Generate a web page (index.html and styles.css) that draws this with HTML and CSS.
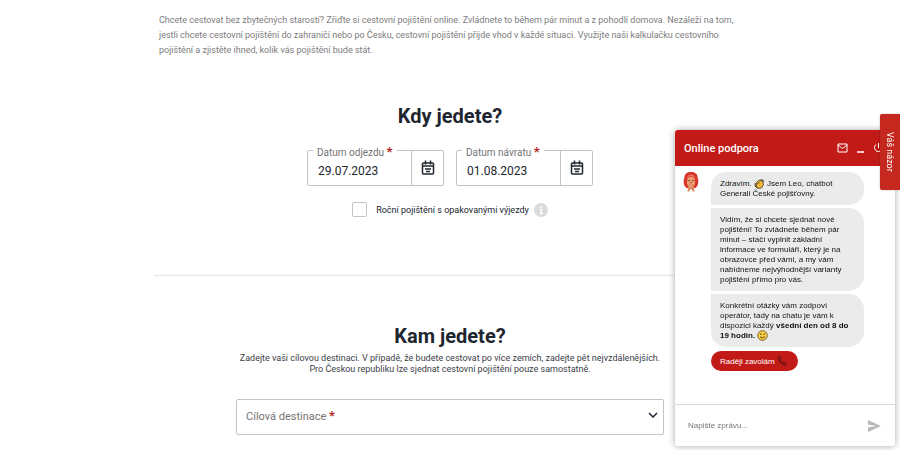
FILE: index.html
```html
<!DOCTYPE html>
<html lang="cs">
<head>
<meta charset="utf-8" />
<title>Cestovní pojištění</title>
<link rel="stylesheet" href="styles.css">
</head>
<body>
<main>
  <p class="intro">Chcete cestovat bez zbytečných starostí? Zřiďte si cestovní pojištění online. Zvládnete to během pár minut a z pohodlí domova. Nezáleží na tom, jestli chcete cestovní pojištění do zahraničí nebo po Česku, cestovní pojištění přijde vhod v každé situaci. Využijte naši kalkulačku cestovního pojištění a zjistěte ihned, kolik vás pojištění bude stát.</p>

  <section class="when">
    <h2>Kdy jedete?</h2>
    <div class="dates">
      <div class="field date">
        <label for="from">Datum odjezdu <b>*</b></label>
        <input type="text" id="from" value="29.07.2023" />
        <button type="button" aria-label="Vybrat datum odjezdu">
          <svg width="14" height="16" viewBox="0 0 14 16"><path d="M2.500 3h9a1 1 0 0 1 1 1v9a1 1 0 0 1-1 1h-9a1 1 0 0 1-1-1V4a1 1 0 0 1 1-1zM1.500 6h11M4.500 .5v4M9.500 .5v4M4 9h6M5 11.500h4" /></svg>
        </button>
      </div>
      <div class="field date">
        <label for="to">Datum návratu <b>*</b></label>
        <input type="text" id="to" value="01.08.2023" />
        <button type="button" aria-label="Vybrat datum návratu">
          <svg width="14" height="16" viewBox="0 0 14 16"><path d="M2.500 3h9a1 1 0 0 1 1 1v9a1 1 0 0 1-1 1h-9a1 1 0 0 1-1-1V4a1 1 0 0 1 1-1zM1.500 6h11M4.500 .5v4M9.500 .5v4M4 9h6M5 11.500h4" /></svg>
        </button>
      </div>
    </div>
    <div class="yearly">
      <input type="checkbox" id="yearly" />
      <label for="yearly">Roční pojištění s opakovanými výjezdy</label>
      <svg width="14" height="14" viewBox="0 0 14 14"><circle cx="7" cy="7" r="7" fill="#dadada" /><path d="M7 3v2M6 6.500h1.300v4M5.700 10.500h3" fill="none" stroke="#fff" stroke-width="1.500" /></svg>
    </div>
  </section>

  <section class="where">
    <h2>Kam jedete?</h2>
    <p>Zadejte vaši cílovou destinaci. V případě, že budete cestovat po více zemích, zadejte pět nejvzdálenějších.<br>Pro Českou republiku lze sjednat cestovní pojištění pouze samostatně.</p>
    <div class="field destination">
      <label for="destination">Cílová destinace <b>*</b></label>
      <select id="destination">
        <option value=""></option>
      </select>
      <svg width="10" height="6" viewBox="0 0 10 6"><path d="M1 1l4 4 4-4" /></svg>
    </div>
  </section>
</main>

<aside class="chat">
  <header>
    <h3>Online podpora</h3>
    <button type="button" aria-label="E-mail">
      <svg width="11" height="10" viewBox="0 0 11 10"><path d="M1 1h9v8H1zM1 2l4.500 3.500L10 2" /></svg>
    </button>
    <button type="button" aria-label="Minimalizovat">
      <svg width="11" height="10" viewBox="0 0 11 10"><path d="M2 9h7" stroke-width="1.500" /></svg>
    </button>
    <button type="button" aria-label="Ukončit">
      <svg width="11" height="10" viewBox="0 0 11 10"><path d="M5.500 0v5M3 1.500a4 4 0 1 0 5 0" /></svg>
    </button>
  </header>
  <div class="messages">
    <svg class="leo" width="16" height="20" viewBox="0 0 16 20">
      <path d="M8 0C4 0 1.500 2 1.500 5 0 9 .5 14 3.500 16h9C15.500 14 16 9 14.500 5 14.500 2 12 0 8 0z" fill="#d9372c" />
      <path d="M4.500 6.500C5.500 4 10.500 4 11.500 6.500l.5 5-2 4H6l-2-4z" fill="#f0a172" />
      <path d="M5 15h6l.5 4.500h-2L9 17.500H7l-.5 2h-2z" fill="#d98a62" />
      <path d="M4.500 4.500L8 3l3.500 1.500" fill="none" stroke="#f58a78" />
      <circle cx="6.200" cy="8.500" r=".7" fill="#4b2019" />
      <circle cx="9.800" cy="8.500" r=".7" fill="#4b2019" />
      <path d="M7 10.500h2l-1 1zM6 12.500q2 1.500 4 0" fill="#fff" stroke="#a33328" stroke-width=".6" />
    </svg>
    <div class="thread">
      <p>Zdravím. <svg width="11" height="10" viewBox="0 0 11 10"><path d="M2.500 3.500L5 1.200 8.500 2l1 3.500-2 3.500-3.500.3L2 7z" fill="#f2bb3c" stroke="#3a2c14" stroke-width=".8" /><path d="M1.200 4v3l2 2.300M3 5.500L5.500 3M6.500 .8h2.200l1.300 2" fill="none" stroke="#3a2c14" stroke-width=".9" /></svg> Jsem Leo, chatbot Generali České pojišťovny.</p>
      <p>Vidím, že si chcete sjednat nové pojištění! To zvládnete během pár minut – stačí vyplnit základní informace ve formuláři, který je na obrazovce před vámi, a my vám nabídneme nejvýhodnější varianty pojištění přímo pro vás.</p>
      <p>Konkrétní otázky vám zodpoví operátor, tady na chatu je vám k dispozici každý <strong>všední den od 8 do 19 hodin.</strong> <svg width="11" height="11" viewBox="0 0 11 11"><circle cx="5.500" cy="5.500" r="4.800" fill="#fbcf45" stroke="#5a4a1c" stroke-width=".8" /><path d="M3.800 3.300v1.700M7.200 3.300v1.700M3 6.800q2.500 2.200 5 0" fill="none" stroke="#4a3b14" stroke-width=".9" /></svg></p>
      <button type="button" class="call">Raději zavolám <svg width="10" height="10" viewBox="0 0 10 10"><path d="M1 1.500L2.500.5l1.700 2.400-1.200 1.300q1 2 2.800 2.800L7.100 5.800l2.400 1.700-1 1.500q-1.500.8-4-1.300T1 1.500z" /></svg></button>
    </div>
  </div>
  <form class="reply">
    <input type="text" placeholder="Napište zprávu..." aria-label="Zpráva" />
    <button type="button" aria-label="Odeslat">
      <svg width="13" height="12" viewBox="0 0 13 12"><path d="M0 0l13 6-13 6V7.500L8 6 0 4.500z" fill="#b9b9b9" /></svg>
    </button>
  </form>
</aside>

<button type="button" class="feedback">Váš názor</button>
</body>
</html>
```

FILE: styles.css
```css
* {
  box-sizing: border-box;
}
body {
  margin: 0;
  background: #fff;
  color: #20262f;
  font-family: Roboto, "Liberation Sans", sans-serif;
  font-size: 9px;
}
button, input, select {
  margin: 0;
  padding: 0;
  border: 0;
  background: none;
  color: inherit;
  font: inherit;
}
button {
  cursor: pointer;
}
h2, h3, p {
  margin: 0;
}
main {
  max-width: 592px;
  margin: 0 auto;
}
.intro {
  padding: 13px 5px 0;
  color: #7d7d7d;
  line-height: 15px;
}
h2 {
  font-size: 20px;
  line-height: 24px;
  font-weight: 700;
  text-align: center;
}
.when {
  padding: 46px 0 58px;
  border-bottom: 1px solid #e6e6e6;
}
.dates {
  display: flex;
  justify-content: center;
  gap: 12px;
  margin-top: 22px;
}
.field {
  position: relative;
  display: flex;
  height: 36px;
  border: 1px solid #c4c4c4;
  border-radius: 2px;
}
.field label {
  position: absolute;
  color: #757575;
  font-size: 10px;
  white-space: nowrap;
}
.field b {
  color: #b3261e;
  font-size: 13px;
  line-height: 10px;
}
.date {
  width: 137px;
}
.date label {
  top: -4px;
  left: 5px;
  padding: 0 4px;
  background: #fff;
  line-height: 12px;
}
.date input {
  flex: 1;
  min-width: 0;
  padding: 6px 0 0 10px;
  font-size: 12px;
}
.date button {
  display: flex;
  align-items: center;
  justify-content: center;
  width: 32px;
  border-left: 1px solid #c4c4c4;
}
.date svg, .destination svg {
  fill: none;
  stroke: #20262f;
  stroke-width: 1.5;
}
.yearly {
  display: flex;
  align-items: center;
  justify-content: center;
  margin-top: 16px;
}
.yearly input {
  appearance: none;
  width: 15px;
  height: 15px;
  border: 1px solid #c4c4c4;
  border-radius: 2px;
}
.yearly label {
  margin: 0 5px 0 9px;
}
.where {
  padding: 48px 82px 15px;
}
.where p {
  margin-top: 5px;
  color: #3c4149;
  line-height: 11px;
  text-align: center;
  white-space: nowrap;
}
.destination {
  margin-top: 24px;
}
.destination label {
  top: 11px;
  left: 9px;
  font-size: 11px;
  line-height: 12px;
  pointer-events: none;
}
.destination select {
  appearance: none;
  width: 100%;
  padding: 0 24px 0 9px;
}
.destination svg {
  position: absolute;
  top: 12px;
  right: 5px;
  pointer-events: none;
}

.chat {
  position: fixed;
  right: 5px;
  bottom: 4px;
  width: 220px;
  background: #fff;
  border-radius: 3px;
  box-shadow: 0 0 7px rgba(0, 0, 0, .35);
  font-family: "Liberation Sans", Arial, sans-serif;
  font-size: 8px;
}
.chat header {
  display: flex;
  align-items: center;
  gap: 7px;
  height: 36px;
  padding: 0 11px 0 9px;
  background: #c21b17;
  border-radius: 3px 3px 0 0;
  color: #fff;
}
.chat h3 {
  flex: 1;
  font-family: Roboto, sans-serif;
  font-size: 11px;
  font-weight: 500;
}
.chat header button {
  display: flex;
}
.chat header svg {
  fill: none;
  stroke: #fff;
}
.messages {
  display: flex;
  align-items: flex-start;
  gap: 12px;
  min-height: 238px;
  padding: 6px 31px 6px 8px;
}
.leo {
  flex: none;
}
.thread {
  display: flex;
  flex: 1;
  flex-direction: column;
  align-items: flex-start;
  gap: 3px;
}
.thread p {
  width: 100%;
  padding: 7px 9px 6px;
  background: #ebebeb;
  border-radius: 0 15px 15px 0;
  color: #111;
  line-height: 10px;
}
.thread p:first-child {
  border-top-left-radius: 15px;
}
.thread p:nth-child(3) {
  border-bottom-left-radius: 15px;
}
.thread svg {
  margin: -1px 0;
  vertical-align: middle;
}
.call {
  height: 20px;
  margin-top: 1px;
  padding: 0 11px 0 9px;
  background: #c21b17;
  border-radius: 10px;
  color: #fff;
}
.call svg {
  fill: none;
  stroke: #531010;
}
.reply {
  display: flex;
  align-items: center;
  height: 42px;
  padding: 0 14px 0 13px;
  border-top: 1px solid #dcdcdc;
}
.reply input {
  flex: 1;
  min-width: 0;
}
.reply input::placeholder {
  color: #757575;
}
.reply button {
  display: flex;
}
.feedback {
  position: fixed;
  top: 114px;
  right: 0;
  width: 20px;
  height: 76px;
  background: #c5281f;
  border-radius: 2px 0 0 2px;
  box-shadow: 0 0 2px rgba(0, 0, 0, .3);
  color: #fff;
  writing-mode: vertical-rl;
}
```
